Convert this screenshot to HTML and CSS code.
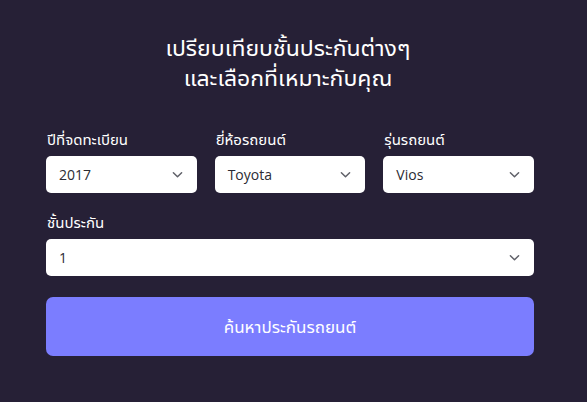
FILE: index.html
```html
<!DOCTYPE html>
<html lang="th">
<head>
<meta charset="utf-8">
<link rel="stylesheet" href="styles.css">
</head>
<body>
<div class="page">
  <h1 class="title">เปรียบเทียบชั้นประกันต่างๆ<br>และเลือกที่เหมาะกับคุณ</h1>
  <div class="row three">
    <div class="field">
      <div class="label">ปีที่จดทะเบียน</div>
      <div class="select"><span>2017</span><svg class="chev" viewBox="0 0 12 8"><path d="M1.5 1.5 L6 6 L10.5 1.5" /></svg></div>
    </div>
    <div class="field">
      <div class="label">ยี่ห้อรถยนต์</div>
      <div class="select"><span>Toyota</span><svg class="chev" viewBox="0 0 12 8"><path d="M1.5 1.5 L6 6 L10.5 1.5" /></svg></div>
    </div>
    <div class="field">
      <div class="label">รุ่นรถยนต์</div>
      <div class="select"><span>Vios</span><svg class="chev" viewBox="0 0 12 8"><path d="M1.5 1.5 L6 6 L10.5 1.5" /></svg></div>
    </div>
  </div>
  <div class="field full">
    <div class="label">ชั้นประกัน</div>
    <div class="select"><span>1</span><svg class="chev" viewBox="0 0 12 8"><path d="M1.5 1.5 L6 6 L10.5 1.5" /></svg></div>
  </div>
  <button class="search">ค้นหาประกันรถยนต์</button>
</div>
</body>
</html>
```
FILE: styles.css
```css
html, body {
  margin: 0;
  padding: 0;
  background: #262036;
}
body {
  font-family: "Noto Sans Thai UI", "Noto Sans Thai", "Noto Sans", sans-serif;
  color: #ffffff;
}
.page {
  width: 488px;
  margin-left: 46px;
  padding-top: 32px;
  display: flex;
  flex-direction: column;
}
.title {
  margin: 0 0 37px 0;
  font-size: 23px;
  font-weight: 400;
  line-height: 30px;
  text-align: center;
  padding-right: 4px;
}
.row.three {
  display: grid;
  grid-template-columns: 1fr 1fr 1fr;
  column-gap: 18px;
}
.field {
  display: flex;
  flex-direction: column;
}
.field.full {
  margin-top: 19px;
}
.label {
  font-size: 15px;
  line-height: 20px;
  height: 20px;
  margin-bottom: 7px;
  padding-left: 1px;
}
.select {
  height: 37px;
  background: #ffffff;
  border-radius: 5px;
  display: flex;
  align-items: center;
  justify-content: space-between;
  padding: 0 14px 0 13px;
  box-sizing: border-box;
  color: #2b2b33;
  font-family: "Open Sans", "Noto Sans", sans-serif;
  font-size: 14px;
}
.chev {
  width: 11px;
  height: 8px;
  fill: none;
  stroke: #5f6068;
  stroke-width: 1.6;
  stroke-linecap: round;
  stroke-linejoin: round;
}
.search {
  margin-top: 21px;
  height: 59px;
  border: none;
  border-radius: 7px;
  background: #7b7dff;
  color: #ffffff;
  font-family: "Noto Sans Thai UI", "Noto Sans Thai", "Noto Sans", sans-serif;
  font-size: 17px;
  padding: 0;
}
```
